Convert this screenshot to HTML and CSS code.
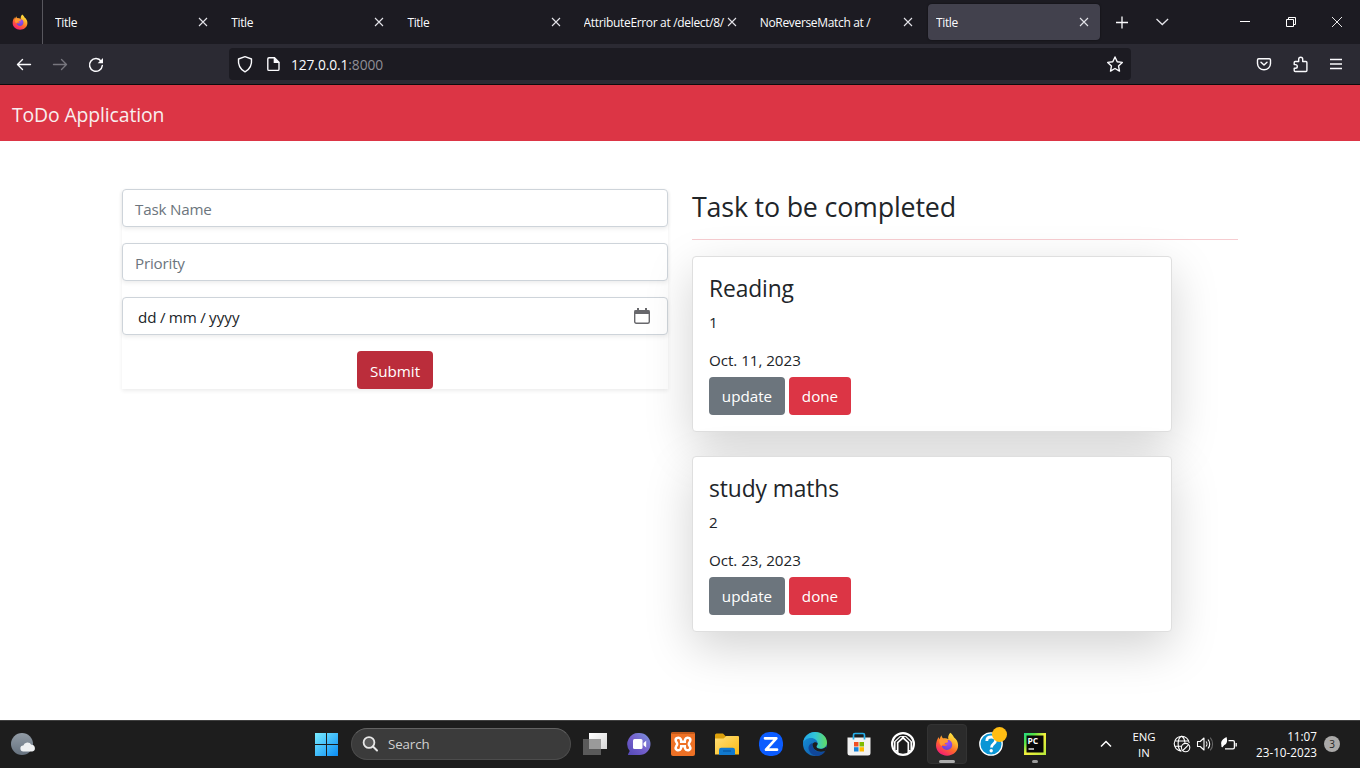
FILE: index.html
```html
<!DOCTYPE html>
<html lang="en">
<head>
<meta charset="utf-8">
<title>Title</title>
<link rel="stylesheet" href="styles.css">
</head>
<body>
<svg class="defs" width="0" height="0">
  <defs>
    <linearGradient id="fxBody" x1=".85" y1="0" x2=".25" y2="1"><stop offset="0" stop-color="#fff14a"/><stop offset=".3" stop-color="#ffbd2e"/><stop offset=".6" stop-color="#ff6a2b"/><stop offset="1" stop-color="#f5157a"/></linearGradient>
    <radialGradient id="fxCore" cx=".6" cy=".3" r=".8"><stop offset="0" stop-color="#a44cf0"/><stop offset="1" stop-color="#5b45d6"/></radialGradient>
    <linearGradient id="win" x1="0" y1="0" x2="24" y2="24" gradientUnits="userSpaceOnUse"><stop offset="0" stop-color="#7df0ff"/><stop offset="1" stop-color="#0a8cf5"/></linearGradient>
    <linearGradient id="chat" x1="1" y1="0" x2="0" y2="1"><stop offset="0" stop-color="#7b96dd"/><stop offset=".5" stop-color="#7560cc"/><stop offset="1" stop-color="#5348b5"/></linearGradient>
    <linearGradient id="folder" x1="0" y1="0" x2="1" y2="1"><stop offset="0" stop-color="#ffe07a"/><stop offset="1" stop-color="#fbba12"/></linearGradient>
    <linearGradient id="edgeA" x1="0" y1=".3" x2="1" y2=".3"><stop offset="0" stop-color="#22a6e8"/><stop offset=".5" stop-color="#31c5d8"/><stop offset="1" stop-color="#62db60"/></linearGradient>
    <linearGradient id="edgeB" x1="0" y1="0" x2="1" y2="1"><stop offset="0" stop-color="#1594dc"/><stop offset="1" stop-color="#104f9f"/></linearGradient>
    <linearGradient id="moon" x1="0" y1="0" x2="0" y2="1"><stop offset="0" stop-color="#929ca6"/><stop offset="1" stop-color="#66727f"/></linearGradient>
    <linearGradient id="pane" x1="0" y1="0" x2="1" y2="1"><stop offset="0" stop-color="#fff"/><stop offset="1" stop-color="#d5d5d5"/></linearGradient>
    <linearGradient id="pycharm" x1="0" y1="0" x2="1" y2="1"><stop offset="0" stop-color="#21d789"/><stop offset=".25" stop-color="#55e344"/><stop offset=".5" stop-color="#f5ef3c"/><stop offset="1" stop-color="#b5e93a"/></linearGradient>
    <symbol id="firefox" viewBox="0 0 24 24">
      <path fill="url(#fxBody)" d="M15.2.7c2 1.4 3 2.8 3.7 4.6 2.7 2 4.2 4.8 4.2 8.3 0 6-4.9 10.1-11 10.1S1 19.400 1 13.600c0-3.500 1.200-6.600 2.800-8.700l.4 2.500 2.200-4.100c.3 1.500.8 2.400 1.700 3.200 2.100-.6 4-.1 5.300.7-.8-2.300.2-4.500 1.800-6.500z"/>
      <path fill="url(#fxCore)" d="M12.600 7.800c3 .3 4.600 2.400 4.600 5 0 3-2.300 5.100-5.200 5.100-2.900 0-5.100-2-5.400-4.700 1.500 1.300 4.200 1.200 5.900-.7-1.600.2-2.600-.4-3-1.300l3.300-.9z"/>
      <path fill="#ff9832" d="M4.500 7.400c2.200-1.300 4.800-1 6.700.3l1.900 1.600c-.4 1.300-2.200 1.200-3.300 1.700l-.5 1.500c-1.500-.2-2.500.5-2.500 1.700-2.200-1.500-2.900-4.300-2.300-6.800z"/>
    </symbol>
    <symbol id="close" viewBox="0 0 10 10"><path d="M1 1l8 8M9 1L1 9" fill="none" stroke="#e4e4ea" stroke-width="1.100"/></symbol>
  </defs>
</svg>

<div class="screen">
  <div class="tabs">
    <div class="pinned"><svg width="16" height="16"><use href="#firefox"/></svg></div>
    <div class="tab"><span class="tab-text">Title</span><svg class="x" width="10" height="10"><use href="#close"/></svg></div>
    <div class="tab"><span class="tab-text">Title</span><svg class="x" width="10" height="10"><use href="#close"/></svg></div>
    <div class="tab"><span class="tab-text">Title</span><svg class="x" width="10" height="10"><use href="#close"/></svg></div>
    <div class="tab"><span class="tab-text">AttributeError at /delect/8/</span><svg class="x" width="10" height="10"><use href="#close"/></svg></div>
    <div class="tab"><span class="tab-text">NoReverseMatch at /</span><svg class="x" width="10" height="10"><use href="#close"/></svg></div>
    <div class="tab active"><span class="tab-text">Title</span><svg class="x" width="10" height="10"><use href="#close"/></svg></div>
    <div class="tab-tools">
      <svg width="40" height="44" viewBox="0 0 40 44"><path d="M14 22.500h12M20 16.500v12" stroke="#fbfbfe" stroke-width="1.300"/></svg>
      <svg width="40" height="44" viewBox="0 0 40 44"><path d="M14.500 19l5.800 5.500 5.800-5.500" fill="none" stroke="#e4e4ea" stroke-width="1.300"/></svg>
    </div>
    <div class="window-tools">
      <svg width="46" height="44" viewBox="0 0 46 44"><path d="M18 21.500h10" stroke="#fff"/></svg>
      <svg width="46" height="44" viewBox="0 0 46 44"><path d="M18.500 19.500h7v7h-7zM20.500 19.500v-2h7v7h-2" fill="none" stroke="#fff"/></svg>
      <svg width="46" height="44" viewBox="0 0 46 44"><path d="M18 17l10 10M28 17L18 27" stroke="#fff" stroke-width=".9"/></svg>
    </div>
  </div>

  <div class="toolbar">
    <div class="nav">
      <svg width="36" height="40" viewBox="0 0 36 40" fill="none" stroke="#fbfbfe" stroke-width="1.400" stroke-linecap="round" stroke-linejoin="round"><path d="M30.500 20.500h-13M22.500 15.500l-5 5 5 5"/></svg>
      <svg width="36" height="40" viewBox="0 0 36 40" fill="none" stroke="#77767e" stroke-width="1.400" stroke-linecap="round" stroke-linejoin="round"><path d="M17.500 20.500h13M25.500 15.500l5 5-5 5"/></svg>
      <svg width="36" height="40" viewBox="0 0 36 40"><path d="M29.200 17.300A6.400 6.400 0 1 0 30.300 21.500" fill="none" stroke="#fbfbfe" stroke-width="1.500" stroke-linecap="round"/><path d="M31 14v5.200h-5.300z" fill="#fbfbfe"/></svg>
    </div>
    <div class="urlbar">
      <svg width="32" height="32" viewBox="0 0 32 32"><path d="M16 8.700l6.500 2.300c.5 5.300-1.500 10.300-6.500 12.800-5-2.500-7-7.500-6.500-12.800z" fill="none" stroke="#fbfbfe" stroke-width="1.400" stroke-linejoin="round"/></svg>
      <svg width="24" height="32" viewBox="0 0 24 32"><path d="M8 9.700h5.500l4.500 4.500v7c0 .7-.5 1.200-1.200 1.200H8c-.7 0-1.200-.5-1.200-1.200V11c0-.7.5-1.300 1.200-1.300z" fill="none" stroke="#fbfbfe" stroke-width="1.400"/><path d="M12.700 9v6h6z" fill="#fbfbfe"/></svg>
      <span class="url">127.0.0.1<span class="port">:8000</span></span>
      <svg class="star" width="32" height="32" viewBox="0 0 32 32"><path d="M16 9l2.200 4.800 5.100.6-3.800 3.500 1 5.200-4.500-2.600-4.500 2.600 1-5.200-3.800-3.500 5.100-.6z" fill="none" stroke="#fbfbfe" stroke-width="1.400" stroke-linejoin="round"/></svg>
    </div>
    <div class="extras">
      <svg width="36" height="40" viewBox="0 0 36 40" fill="none" stroke="#fbfbfe" stroke-width="1.400" stroke-linecap="round" stroke-linejoin="round"><path d="M12.700 14.700h10.600c.7 0 1.200.5 1.200 1.200v3.700a6.500 6.200 0 0 1-13 0v-3.700c0-.7.5-1.200 1.200-1.200zM15 18.200l3 2.800 3-2.800"/></svg>
      <svg width="36" height="40" viewBox="0 0 36 40" fill="none" stroke="#fbfbfe" stroke-width="1.400" stroke-linejoin="round"><path d="M13.200 17.500h3.500v-2.300a2 2 0 0 1 4 0v2.300h3.200c.6 0 1 .4 1 1V26.500c0 .6-.4 1-1 1H13.200c-.6 0-1-.4-1-1v-2.300h1.300a1.800 1.800 0 0 0 0-3.600h-1.300v-2.100c0-.6.4-1 1-1z"/></svg>
      <svg width="36" height="40" viewBox="0 0 36 40"><path d="M12 15.500h12M12 20h12M12 24.500h12" stroke="#fbfbfe" stroke-width="1.300"/></svg>
    </div>
  </div>

  <main class="page">
    <header class="brandbar"><span class="brand">ToDo Application</span></header>
    <div class="container">
      <form class="task-form">
        <div class="field ph"><span>Task Name</span></div>
        <div class="field ph"><span>Priority</span></div>
        <div class="field date">
          <span class="date-parts"><span>dd</span><i>/</i><span>mm</span><i>/</i><span>yyyy</span></span>
          <svg width="16" height="16" viewBox="0 0 16 16"><rect x=".7" y="2.700" width="14.600" height="12.600" rx="1.500" fill="none" stroke="#68686c" stroke-width="1.400"/><path d="M.5 2.200h15V6H.500zM3 0h2v3H3zM11 0h2v3h-2z" fill="#68686c"/></svg>
        </div>
        <button type="button" class="btn submit">Submit</button>
      </form>
      <section class="tasks">
        <h3 class="heading">Task to be completed</h3>
        <hr class="rule">
        <article class="card">
          <h4 class="task-title">Reading</h4>
          <p class="priority">1</p>
          <div class="due">Oct. 11, 2023</div>
          <div class="actions"><span class="btn update">update</span><span class="btn done">done</span></div>
        </article>
        <article class="card">
          <h4 class="task-title">study maths</h4>
          <p class="priority">2</p>
          <div class="due">Oct. 23, 2023</div>
          <div class="actions"><span class="btn update">update</span><span class="btn done">done</span></div>
        </article>
      </section>
    </div>
  </main>

  <footer class="taskbar">
    <div class="weather"><svg width="26" height="24" viewBox="0 0 26 24"><circle cx="12" cy="12" r="11" fill="url(#moon)"/><path d="M13.500 19.500a3 3 0 0 1-.2-6 4.300 4.300 0 0 1 8-.7 3.400 3.400 0 0 1 1 6.700z" fill="#eef0f2"/></svg></div>
    <div class="apps">
      <div class="app"><svg width="24" height="24" viewBox="0 0 24 24"><path d="M1 1h11v11H1zM13 1h11v11H13zM1 13h11v11H1zM13 13h11v11H13z" fill="url(#win)"/></svg></div>
      <div class="search"><svg width="18" height="18" viewBox="0 0 18 18"><circle cx="8" cy="7.500" r="5.400" fill="#5a5a5a" stroke="#e8e8e8" stroke-width="1.800"/><path d="M12 11.500l4 4" stroke="#e8e8e8" stroke-width="2" stroke-linecap="round"/></svg><span>Search</span></div>
      <div class="app"><svg width="24" height="24" viewBox="0 0 24 24"><path d="M6 1h18v16H6z" fill="url(#pane)"/><path d="M0 7h18v16H0z" fill="#626262" fill-opacity=".9"/><path d="M6 7h12v10H6z" fill="#9a9a9a"/></svg></div>
      <div class="app"><svg width="24" height="24" viewBox="0 0 24 24"><path d="M12.500 1A11.200 11.200 0 0 1 23.500 12a11 11 0 0 1-11 11H1.500c-.5 0-.8-.4-.5-.8l1.700-3.300A11.100 11.100 0 0 1 12.500 1z" fill="url(#chat)"/><rect x="6" y="7" width="9.500" height="10" rx="1.500" fill="#fff"/><path d="M16.500 11l2.700-2.300v6.800l-2.700-2.300z" fill="#fff"/></svg></div>
      <div class="app"><svg width="24" height="24" viewBox="0 0 24 24"><rect width="24" height="24" rx="2" fill="#ee7125"/><path d="M.7 1h22.600" stroke="#b65318" stroke-width="1.500"/><path d="M9 6.300c-2.200-1.500-5 .3-4.200 2.600.3 1.300 1.400 1.700 1.400 3.100s-1.100 1.800-1.400 3.100c-.8 2.300 2 4.100 4.200 2.600 1.300-1 1.200-2.300 1.200-3.500h3.600c0 1.200-.1 2.500 1.200 3.500 2.200 1.500 5-.3 4.200-2.600-.3-1.300-1.400-1.700-1.400-3.100s1.100-1.800 1.400-3.100c.8-2.300-2-4.100-4.200-2.600-1.300 1-1.200 2.300-1.200 3.500h-3.600c0-1.200.1-2.500-1.200-3.500z" fill="none" stroke="#fff" stroke-width="2.500"/></svg></div>
      <div class="app"><svg width="24" height="24" viewBox="0 0 24 24"><path d="M0 3a1.500 1.500 0 0 1 1.500-1.500H8L10.500 4H13v5H0z" fill="#dca00b"/><path d="M0 6.500h8.500L11.500 4H23a1 1 0 0 1 1 1v17.500H0z" fill="url(#folder)"/><path d="M4 23v-5a2.200 2.200 0 0 1 2.200-2.200h11.600A2.200 2.200 0 0 1 20 18v5z" fill="#1179ce"/><path d="M8 19h8" stroke="#0758a4" stroke-width="1.200"/></svg></div>
      <div class="app"><svg width="24" height="24" viewBox="0 0 24 24"><rect width="24" height="24" rx="10.500" fill="#0b5cff"/><path d="M6 6.300h11.300L7 17.700h11" fill="none" stroke="#fff" stroke-width="2.700" stroke-linejoin="round" stroke-linecap="round"/></svg></div>
      <div class="app"><svg width="24" height="24" viewBox="0 0 24 24"><circle cx="12" cy="12" r="12" fill="url(#edgeB)"/><path d="M0 11C1 4 6 0 12 0c7 0 12 5 12 10.500 0 4-3 6.200-6.300 6.200-2.500 0-4.200-1-4.200-2 0-.8 1.200-1.200 1.200-3C14.700 8.500 11.800 6 8 6 4 6 1 8.300 0 11z" fill="url(#edgeA)"/><path d="M9.500 11c-.5 5.500 3.300 9.300 8 9.300 2 0 3.300-.5 4.800-1.400l-.7 1.300c-1.800 2.300-4.600 3.800-7.600 3.800-5-.2-8.500-4.400-8.500-8.200 0-2.300 1.600-4.100 4-4.800z" fill="#10479a"/><path d="M14.600 11.200c0 1.900-1.200 2.400-1.200 3.400 0 1.300 2 2.400 4.600 2.400 1.500 0 3.300-.6 4.700-2l1 .8-1.700 3.200c-5.800 2-12.500-.3-12.500-7 1-2 3.700-2.500 5.100-.8z" fill="#1d1d1d"/></svg></div>
      <div class="app"><svg width="24" height="24" viewBox="0 0 24 24"><path d="M.500 5.500h23V21a2.500 2.500 0 0 1-2.500 2.500H3A2.500 2.500 0 0 1 .500 21z" fill="#f1f1f1"/><path d="M6.500 7.500V3A1.500 1.500 0 0 1 8 1.500h8A1.500 1.500 0 0 1 17.500 3v4.500" fill="none" stroke="#25aee9" stroke-width="1.700"/><path d="M7 10h4.500v4.500H7z" fill="#f25022"/><path d="M12.500 10H17v4.500h-4.500z" fill="#7fba00"/><path d="M7 15.200h4.500v4.300H7z" fill="#1783d8"/><path d="M12.500 15.200H17v4.300h-4.500z" fill="#ffb900"/></svg></div>
      <div class="app"><svg width="24" height="24" viewBox="0 0 24 24" fill="none"><circle cx="12" cy="12" r="10.900" fill="#1d1d1d" stroke="#fff" stroke-width="2.200"/><path d="M3 17V9.500L9 4h6l6 5.500V17l-4.500 4.500V11L12 7l-4.500 4v10.500z" fill="#fff"/><path d="M5.200 18V10L10.500 5M18.800 18V10L13.500 5" stroke="#1d1d1d" stroke-width="1.300"/><path d="M8.700 19.500V11.200L12 8.500l3.300 2.700v8.300L12 17.500z" fill="#1d1d1d"/></svg></div>
      <div class="app selected"><svg width="24" height="24"><use href="#firefox"/></svg><b class="run wide"></b></div>
      <div class="app"><svg width="24" height="24" viewBox="0 0 24 24"><circle cx="12" cy="12" r="11.200" fill="#0b96d5" stroke="#fff" stroke-width="1.300"/><path d="M7.800 9c0-2.700 1.900-4 4.400-4 2.600 0 4.400 1.400 4.400 3.600 0 3.200-4.100 3.200-4.100 6.800" fill="none" stroke="#fff" stroke-width="2.800"/><circle cx="12.200" cy="18.800" r="1.700" fill="#fff"/></svg><b class="dot"></b></div>
      <div class="app"><svg width="24" height="24" viewBox="0 0 24 24"><path d="M1 1h22v22H1z" fill="url(#pycharm)"/><path d="M3.500 3.500h17v17h-17z" fill="#080808"/><path d="M5.500 17h5.500" stroke="#fff" stroke-width="1.300"/><text x="4.500" y="12" class="pc">PC</text></svg><b class="run"></b></div>
    </div>
    <div class="tray">
      <svg class="chev" width="12" height="8" viewBox="0 0 12 8"><path d="M1 6.500l5-5 5 5" fill="none" stroke="#fff" stroke-width="1.500"/></svg>
      <div class="lang"><span>ENG</span><span>IN</span></div>
      <svg class="globe" width="18" height="18" viewBox="0 0 18 18" fill="none" stroke="#fff" stroke-width="1.100"><path d="M16.200 8A7.500 7.500 0 1 0 8 16.200M8.500 16.200c-4.500-2-4.500-13 0-15 2 1 3.200 3.500 3.400 6.500M1.500 6h14M1.500 11.300h7"/><circle cx="12.600" cy="12.600" r="4.200"/><path d="M9.800 15.500l5.700-5.700"/></svg>
      <svg class="sound" width="18" height="16" viewBox="0 0 18 16" fill="none" stroke="#fff" stroke-width="1.100" stroke-linejoin="round"><path d="M1.500 5.500h2.700L8 2v12l-3.800-3.500H1.500zM10 5.500c1.200 1.300 1.200 3.700 0 5M12 3.500c2.300 2.500 2.300 6.500 0 9"/><path d="M14.200 1.600c3.200 3.500 3.200 9.300 0 12.800" stroke="#666"/></svg>
      <svg class="battery" width="18" height="16" viewBox="0 0 18 16"><path d="M8.500 4.600H13a1.400 1.400 0 0 1 1.400 1.400v5.500a1.400 1.400 0 0 1-1.400 1.400H5M16.200 7v3.500" fill="none" stroke="#fff" stroke-width="1.300"/><path d="M1.300 8.500C.5 5 3 3 6.500 1c1 3.500 1 6.800-2.200 7.900l-1.800 2.300-1-.2z" fill="#fff"/></svg>
      <div class="clock"><span>11:07</span><span>23-10-2023</span></div>
      <span class="badge">3</span>
    </div>
  </footer>
</div>
</body>
</html>
```
FILE: styles.css
```css
* { box-sizing: border-box; }
body { margin: 0; font-family: "Open Sans", "Noto Sans", sans-serif; font-size: 15.2px; color: #212529; overflow: hidden; }
svg { display: block; flex: none; }
.defs { position: absolute; }
.screen { width: 1360px; height: 768px; display: flex; flex-direction: column; background: #fff; }

.tabs { height: 44px; display: flex; background: #1c1b22; flex: none; }
.pinned { width: 43px; padding: 14px 0 0 12px; border-right: 1px solid #58575e; margin-right: 4px; }
.tab { width: 172.2px; height: 36px; margin: 4px 4px 0 0; padding: 0 11px 0 8px; display: flex; align-items: center; border-radius: 4px; color: #fbfbfe; flex: none; font-size: 12px; }
.tab.active { background: #42414d; width: 172px; box-shadow: 0 0 2px rgba(0,0,0,.6); }
.tab-text { flex: 1; white-space: nowrap; overflow: hidden; line-height: 18px; padding-top: 1px; letter-spacing: -.33px; }
.tab-tools { display: flex; margin-left: -2px; }
.window-tools { display: flex; margin-left: auto; }

.toolbar { height: 41px; display: flex; background: #2b2a33; border-bottom: 1px solid #0c0c0d; flex: none; }
.nav { display: flex; width: 229px; }
.urlbar { width: 902px; height: 32px; margin-top: 4px; border-radius: 4px; background: #1c1b22; display: flex; align-items: center; }
.url { color: #fbfbfe; font-size: 13.8px; line-height: 20px; letter-spacing: -.1px; margin-left: 6px; padding-top: 1px; }
.port { color: #8f8e96; }
.star { margin-left: auto; }
.extras { display: flex; margin-left: auto; margin-right: 6px; }

.page { flex: 1; min-height: 0; overflow: hidden; }
.brandbar { height: 56px; background: #dc3545; padding: 15px 12px 0; }
.brand { display: block; color: #f8eeee; font-size: 19.4px; letter-spacing: -.13px; line-height: 30px; }
.container { width: 1116px; margin: 48px auto 0; display: grid; grid-template-columns: 546px 546px; gap: 24px; align-items: start; }
.task-form { display: flex; flex-direction: column; gap: 16px; box-shadow: 0 2px 4px rgba(0,0,0,.075); }
.field { height: 38px; border: 1px solid #ced4da; border-radius: 4px; padding: 2px 12px 0; display: flex; align-items: center; background: #fff; box-shadow: 0 2px 4px rgba(0,0,0,.075); }
.ph { color: #6c757d; letter-spacing: -.2px; }
.date { padding: 0 17px 0 15px; justify-content: space-between; }
.date svg { margin-bottom: 1px; }
.date-parts { display: flex; gap: 3.3px; padding-top: 2px; }
.date-parts i { font-style: normal; }
.btn { height: 38px; border: 0; border-radius: 4px; color: #fff; font: 15.2px/38px "Open Sans", "Noto Sans", sans-serif; padding: 0; text-align: center; }
.submit { width: 76px; padding-top: 1px; background: #bb2d3b; align-self: center; }
.update { width: 76px; background: #6c757d; }
.done { width: 62px; background: #dc3545; }
.heading { margin: 0 0 16px; height: 34px; font-size: 26.8px; letter-spacing: -.18px; line-height: 36px; font-weight: 400; }
.rule { height: 1px; border: 0; margin: 0 0 16px; background: #dc3545; opacity: .25; }
.card { width: 480px; height: 176px; border: 1px solid #dfdfdf; border-radius: 4px; background: #fff; padding: 16px; margin-bottom: 24px; box-shadow: 0 16px 48px rgba(0,0,0,.175); }
.task-title { margin: 0 0 5px; font-size: 22.8px; line-height: 32px; letter-spacing: -.1px; font-weight: 400; }
.priority { margin: 0 0 14px; line-height: 24px; font-size: 15.2px; }
.due { line-height: 24px; font-size: 15.2px; letter-spacing: -.05px; }
.actions { display: flex; gap: 4px; margin-top: 5px; }

.taskbar { height: 48px; flex: none; display: flex; background: #1d1d1d; border-top: 1px solid #404040; color: #fff; }
.weather { width: 304px; padding: 11px 0 0 10px; }
.apps { display: flex; align-items: flex-start; }
.app { width: 44px; height: 46px; display: flex; align-items: center; justify-content: center; position: relative; }
.search { width: 220px; height: 32px; margin: 7px 2px 0 3px; border-radius: 16px; background: #3b3b3b; border: 1px solid #4c4c4c; border-top-color: #626262; display: flex; align-items: center; padding-left: 9px; gap: 9px; color: #d0d0d0; font-size: 13.3px; letter-spacing: -.1px; }
.selected::before { content: ""; position: absolute; inset: 3px 2px; background: #2b2b2b; border: 1px solid #333; border-radius: 4px; }
.selected svg { position: relative; }
.run { position: absolute; bottom: 4px; left: 19px; width: 6px; height: 3px; border-radius: 2px; background: #9b9b9b; }
.run.wide { left: 14px; width: 16px; background: #adadad; }
.dot { position: absolute; left: 23px; top: 6px; width: 15px; height: 15px; border-radius: 50%; background: #ffbd13; }
.pc { font: 700 8.5px "Open Sans", sans-serif; fill: #fff; }
.tray { height: 46px; margin-left: auto; display: flex; align-items: center; font-size: 11.4px; line-height: 16px; padding-right: 20px; }
.chev { margin-right: 20px; }
.lang { width: 24px; display: flex; flex-direction: column; align-items: center; margin-right: 17px; padding-top: 1px; }
.globe { margin-right: 5px; }
.sound { margin-right: 6px; }
.battery { margin-right: 14px; }
.clock { width: 65px; display: flex; flex-direction: column; align-items: flex-end; margin-right: 7px; white-space: nowrap; font-size: 11.7px; }
.badge { width: 16px; height: 16px; border-radius: 50%; background: #aaa9a8; color: #222; font-size: 10px; line-height: 16px; text-align: center; }
```
